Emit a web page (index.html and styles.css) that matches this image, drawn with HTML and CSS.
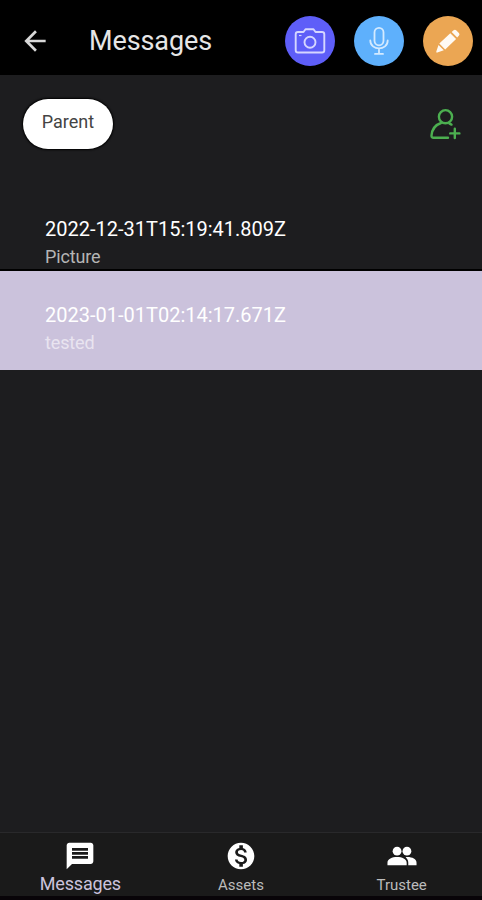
FILE: index.html
```html
<!DOCTYPE html>
<html lang="en">
<head>
    <meta charset="UTF-8">
    <meta name="viewport" content="width=device-width, initial-scale=1.0">
    <title>Messages</title>
    <link rel="stylesheet" href="styles.css">
</head>
<body>
    <header class="header">
        <button class="back" aria-label="Back">
            <svg width="32" height="32" viewBox="0 0 24 24"><path d="M20 11H7.830l5.590-5.590L12 4l-8 8 8 8 1.410-1.410L7.830 13H20v-2z" fill="#d8d8d8"/></svg>
        </button>
        <h1>Messages</h1>
        <div class="actions">
            <button class="action camera" aria-label="Picture">
                <svg width="50" height="50" viewBox="0 0 50 50" fill="none" stroke="#d5d6ff" stroke-width="1.9" stroke-linejoin="round">
                    <path d="M13 16h5.500l2-2.700h8l2 2.700H37q2.300 0 2.300 2.300v15.900q0 2.300-2.300 2.300H13q-2.300 0-2.300-2.300V18.300q0-2.300 2.300-2.300z"/>
                    <circle cx="25" cy="26.300" r="5.500"/>
                    <path d="M14 19.500h2.500" stroke-width="1.200"/>
                </svg>
            </button>
            <button class="action mic" aria-label="Audio">
                <svg width="50" height="50" viewBox="0 0 50 50" fill="none" stroke="#d3eaff" stroke-width="1.8" stroke-linecap="round">
                    <rect x="20.500" y="11.800" width="9" height="17.500" rx="4.500"/>
                    <path d="M16.300 24.500c0 10.500 17.400 10.500 17.400 0M25 32.600v5.200M21 37.900h8"/>
                </svg>
            </button>
            <button class="action write" aria-label="Text">
                <svg width="50" height="50" viewBox="0 0 50 50" fill="#fffaf3">
                    <path d="M27.300 17.200l5.800 5.800-10.900 10.500-5.900-5.900zM15.500 28.900l5.300 5.300-6.500 2.400q-1.300.2-1-1zM28.700 15.900l1.900-1.700q1.400-1.100 2.800.2l2.500 2.500q1.200 1.300.1 2.700l-1.800 1.800z"/>
                </svg>
            </button>
        </div>
    </header>
    <main class="content">
        <div class="recipients">
            <button class="chip">Parent</button>
            <button class="add" aria-label="Add trustee">
                <svg width="32" height="32" viewBox="0 0 32 32" fill="none" stroke="#4caf50" stroke-width="2.400" stroke-linecap="round" stroke-linejoin="round">
                    <circle cx="16.500" cy="8.700" r="6.600"/>
                    <path d="M12 15C6 17 3 21.500 2.500 27.500q-.1 2.300 2 2.300H19M20.500 15.600l2 1M25.800 20.800v9.200M21.200 25.400h9.200"/>
                </svg>
            </button>
        </div>
        <ul class="messages">
            <li class="message">
                <span class="date">2022-12-31T15:19:41.809Z</span>
                <span class="text">Picture</span>
            </li>
            <li class="message selected">
                <span class="date">2023-01-01T02:14:17.671Z</span>
                <span class="text">tested</span>
            </li>
        </ul>
    </main>
    <nav class="tabs">
        <a class="tab active">
            <svg width="32" height="32" viewBox="0 0 24 24" fill="#fff"><path d="M20 2H4c-1.100 0-1.990.9-1.990 2L2 22l4-4h14c1.100 0 2-.9 2-2V4c0-1.100-.9-2-2-2zM6 9h12v2H6V9zm12 5H6v-2h12v2zm0-6H6V6h12v2z"/></svg>
            <span>Messages</span>
        </a>
        <a class="tab">
            <svg width="32" height="32" viewBox="0 0 24 24" fill="#fff"><path d="M12 2C6.480 2 2 6.480 2 12s4.480 10 10 10 10-4.480 10-10S17.520 2 12 2zm1.410 16.090V20h-2.670v-1.930c-1.710-.36-3.160-1.460-3.270-3.400h1.960c.1 1.050.82 1.870 2.650 1.870 1.960 0 2.400-.98 2.400-1.590 0-.83-.44-1.610-2.670-2.140-2.480-.6-4.180-1.620-4.180-3.670 0-1.720 1.390-2.840 3.110-3.210V4h2.670v1.950c1.860.45 2.790 1.860 2.850 3.390H14.300c-.05-1.110-.64-1.870-2.220-1.870-1.500 0-2.400.68-2.400 1.640 0 .84.65 1.390 2.670 1.910s4.180 1.390 4.180 3.910c-.01 1.830-1.380 2.830-3.120 3.160z"/></svg>
            <span>Assets</span>
        </a>
        <a class="tab">
            <svg width="32" height="32" viewBox="0 0 24 24" fill="#fff">
                <circle cx="8.300" cy="8.400" r="3.300"/>
                <circle cx="15.700" cy="8.400" r="3.300"/>
                <path d="M1.100 19v-2c0-2.700 3.500-4.200 7.200-4.200s7.200 1.500 7.200 4.200v2zM14.700 12.900c4.400-.4 8.200 1.200 8.200 4.100v2h-6.200v-2c0-1.700-.7-3-2-4.100z"/>
            </svg>
            <span>Trustee</span>
        </a>
    </nav>
</body>
</html>
```
FILE: styles.css
```css
:root {
    --background: #1d1d1f;
    --bar: #1a1a1a;
    --selected: #cbc2dc;
}
* { box-sizing: border-box; }
body { margin: 0; height: 900px; display: flex; flex-direction: column; overflow: hidden; background-color: var(--background); color: #fff; font-family: Roboto, "Liberation Sans", sans-serif; }
button { border: 0; padding: 0; background: none; font-family: inherit; }
svg { display: block; flex: none; }
.header { height: 75px; flex: none; display: flex; align-items: center; padding: 6px 9px 0 19px; background-color: #000; }
h1 { margin: 0 0 0 38px; font-size: 27px; font-weight: 400; line-height: 32px; letter-spacing: -0.1px; color: #e6e6e6; }
.actions { display: flex; gap: 19px; margin-left: auto; }
.action { width: 50px; height: 50px; border-radius: 50%; }
.camera { background-color: #5e5ef8; }
.mic { background-color: #5eb0fc; }
.write { background-color: #eba653; }
.content { flex: 1; }
.recipients { display: flex; justify-content: space-between; padding: 24px 21px 0 23px; height: 110px; }
.chip { width: 90px; height: 50px; padding-bottom: 5px; border-radius: 25px; background-color: #fff; color: #444; font-size: 18px; box-shadow: 0 0 2px 1px #000; }
.add { height: 32px; margin-top: 9px; }
.messages { list-style: none; margin: 0; padding: 0; }
.message { height: 86px; padding: 32px 45px 0; border-bottom: 2px solid #000; }
.message.selected { height: 99px; border: 0; background-color: var(--selected); }
.date, .text { display: block; }
.date { font-size: 20px; line-height: 24px; }
.text { margin-top: 5px; font-size: 18px; line-height: 22px; letter-spacing: -0.15px; color: #b5b5b5; }
.selected .text { color: #e9e4f0; }
.tabs { height: 68px; flex: none; display: flex; background-color: var(--bar); border-top: 1px solid #29292b; border-bottom: 4px solid #080408; }
.tab { flex: 1; display: flex; flex-direction: column; align-items: center; padding-top: 7px; font-size: 15px; line-height: 26px; color: #bcbcbc; }
.active { font-size: 18px; line-height: 23px; letter-spacing: -0.2px; color: #cbc2dc; }
```
